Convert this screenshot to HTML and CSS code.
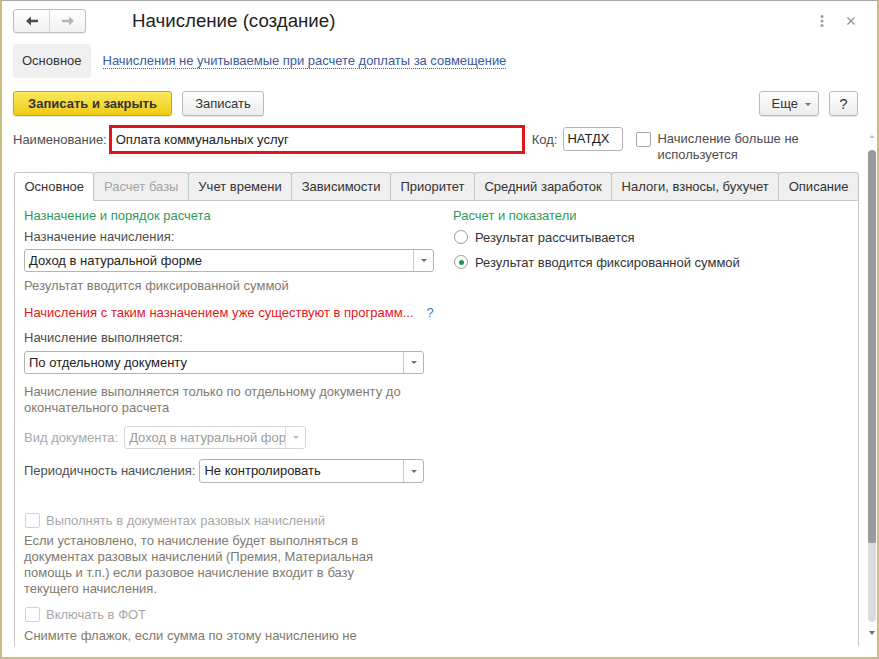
FILE: index.html
```html
<!DOCTYPE html>
<html lang="ru">
<head>
    <meta charset="UTF-8">
    <title>Начисление (создание)</title>
    <link rel="stylesheet" href="styles.css">
</head>
<body>

<div class="window">

    <!-- Заголовок формы -->
    <div class="titlebar">
        <div class="nav">
            <button class="nav-btn nav-back">
                <svg width="12" height="10" viewBox="0 0 12 10"><path d="M0 5 L5 0.5 L5 3.8 L12 3.8 L12 6.2 L5 6.2 L5 9.5 Z" fill="#4a4a4a"/></svg>
            </button>
            <button class="nav-btn">
                <svg width="12" height="10" viewBox="0 0 12 10"><path d="M12 5 L7 0.5 L7 3.8 L0 3.8 L0 6.2 L7 6.2 L7 9.5 Z" fill="#b4b4b4"/></svg>
            </button>
        </div>
        <h1 class="title">Начисление (создание)</h1>
        <div class="title-tools">
            <svg width="4" height="12" viewBox="0 0 4 12"><circle cx="2" cy="1.5" r="1.5" fill="#9a9a9a"/><circle cx="2" cy="6" r="1.5" fill="#9a9a9a"/><circle cx="2" cy="10.5" r="1.5" fill="#9a9a9a"/></svg>
            <svg width="8" height="8" viewBox="0 0 8 8"><path d="M0.5 0.5 L7.5 7.5 M7.5 0.5 L0.5 7.5" stroke="#8a8a8a" stroke-width="1.1"/></svg>
        </div>
    </div>

    <!-- Панель навигации формы -->
    <div class="sections">
        <span class="section-current">Основное</span>
        <a class="section-link" href="#">Начисления не учитываемые при расчете доплаты за совмещение</a>
    </div>

    <!-- Командная панель -->
    <div class="toolbar">
        <button class="btn btn-default">Записать и закрыть</button>
        <button class="btn btn-save">Записать</button>
        <div class="toolbar-right">
            <button class="btn btn-more">Еще <span class="caret"></span></button>
            <button class="btn btn-help">?</button>
        </div>
    </div>

    <div class="scroll-area">
        <div class="form">

            <div class="name-row">
                <span class="name-label">Наименование:</span>
                <div class="field-name">Оплата коммунальных услуг</div>
                <span class="code-label">Код:</span>
                <div class="field-code">НАТДХ</div>
                <span class="check check-top"></span>
                <span class="check-top-label">Начисление больше не<br>используется</span>
            </div>

            <div class="tabs">
                <div class="tab tab-active">Основное</div>
                <div class="tab tab-disabled">Расчет базы</div>
                <div class="tab">Учет времени</div>
                <div class="tab">Зависимости</div>
                <div class="tab">Приоритет</div>
                <div class="tab">Средний заработок</div>
                <div class="tab">Налоги, взносы, бухучет</div>
                <div class="tab">Описание</div>
            </div>

            <div class="tab-panel">
                <div class="col-left">
                    <div class="group-title">Назначение и порядок расчета</div>
                    <div class="field-label mt5">Назначение начисления:</div>
                    <div class="select select-wide mt4">
                        <span class="select-value">Доход в натуральной форме</span>
                        <span class="select-btn"><span class="caret"></span></span>
                    </div>
                    <div class="hint mt6">Результат вводится фиксированной суммой</div>
                    <div class="warn-row mt11">
                        <span class="warn">Начисления с таким назначением уже существуют в программ...</span>
                        <span class="warn-help">?</span>
                    </div>
                    <div class="field-label mt9">Начисление выполняется:</div>
                    <div class="select select-mid mt5">
                        <span class="select-value">По отдельному документу</span>
                        <span class="select-btn"><span class="caret"></span></span>
                    </div>
                    <div class="hint mt10">Начисление выполняется только по отдельному документу до<br>окончательного расчета</div>
                    <div class="inline-row mt10">
                        <span class="field-label disabled">Вид документа:</span>
                        <div class="select select-doc disabled">
                            <span class="select-value">Доход в натуральной фор</span>
                            <span class="select-btn"><span class="caret"></span></span>
                        </div>
                    </div>
                    <div class="inline-row mt10">
                        <span class="field-label">Периодичность начисления:</span>
                        <div class="select select-period">
                            <span class="select-value">Не контролировать</span>
                            <span class="select-btn"><span class="caret"></span></span>
                        </div>
                    </div>
                    <div class="check-row mt29">
                        <span class="check disabled"></span>
                        <span class="disabled">Выполнять в документах разовых начислений</span>
                    </div>
                    <div class="hint mt5">Если установлено, то начисление будет выполняться в<br>документах разовых начислений (Премия, Материальная<br>помощь и т.п.) если разовое начисление входит в базу<br>текущего начисления.</div>
                    <div class="check-row mt9">
                        <span class="check disabled"></span>
                        <span class="disabled">Включать в ФОТ</span>
                    </div>
                    <div class="hint mt6">Снимите флажок, если сумма по этому начислению не</div>
                </div>

                <div class="col-right">
                    <div class="group-title">Расчет и показатели</div>
                    <div class="radio-row mt5">
                        <span class="radio"></span>
                        <span>Результат рассчитывается</span>
                    </div>
                    <div class="radio-row mt9">
                        <span class="radio radio-on"></span>
                        <span>Результат вводится фиксированной суммой</span>
                    </div>
                </div>
            </div>

        </div>

        <!-- Полоса прокрутки -->
        <div class="scrollbar">
            <span class="sb-up"></span>
            <div class="sb-track"><div class="sb-thumb"></div></div>
            <span class="sb-down"></span>
        </div>
    </div>

</div>

</body>
</html>
```

FILE: styles.css
```css
* {
    box-sizing: border-box;
}
html, body {
    margin: 0;
    padding: 0;
}
body {
    font-family: "Liberation Sans", Arial, sans-serif;
    font-size: 13px;
    color: #333;
    background-color: #fff;
    overflow: hidden;
}
button {
    font-family: inherit;
    font-size: 13px;
    color: #333;
    cursor: pointer;
}
.window {
    height: 659px;
    border: 2px solid #cbbd7c;
    border-top: 1px solid #a8a8a8;
    padding-bottom: 11px;
    display: flex;
    flex-direction: column;
}

/* Заголовок */
.titlebar {
    height: 40px;
    flex: none;
    display: flex;
    align-items: center;
    padding: 0 19px 0 11px;
}
.nav {
    display: flex;
    height: 24px;
    border: 1px solid #bdbdbd;
    border-radius: 3px;
    background: linear-gradient(#fff, #f1f1f1);
    box-shadow: 0 1px 1px rgba(0, 0, 0, 0.08);
}
.nav-btn {
    width: 35px;
    border: none;
    background: none;
    padding: 0;
    display: flex;
    align-items: center;
    justify-content: center;
}
.nav-back {
    width: 36px;
    border-right: 1px solid #d4d4d4;
}
.title {
    margin: 0 0 0 46px;
    font-size: 18.7px;
    font-weight: normal;
    color: #1e1e1e;
}
.title-tools {
    margin-left: auto;
    margin-right: 3px;
    display: flex;
    align-items: center;
    gap: 23px;
}

/* Панель разделов */
.sections {
    flex: none;
    margin-top: 3px;
    height: 34px;
    padding-left: 11px;
    display: flex;
    align-items: center;
}
.section-current {
    height: 34px;
    line-height: 34px;
    padding: 0 9px;
    background-color: #f0f0f0;
    border-radius: 3px;
    color: #333;
}
.section-link {
    margin-left: 12px;
    color: #3b5aa0;
    text-decoration: none;
    border-bottom: 1px dotted #3b5aa0;
    line-height: 14px;
    letter-spacing: -0.03px;
}

/* Командная панель */
.toolbar {
    flex: none;
    margin-top: 13px;
    height: 25px;
    padding: 0 19px 0 11px;
    display: flex;
    gap: 10px;
}
.btn {
    height: 25px;
    padding: 0 13px;
    border: 1px solid #b9b9b9;
    border-radius: 3px;
    background: linear-gradient(#fff, #ececec);
    box-shadow: 0 1px 1px rgba(0, 0, 0, 0.1);
}
.btn-default {
    width: 159px;
    padding: 0;
    font-weight: bold;
    background: linear-gradient(#fbe85e, #f1cc14);
    border-color: #c9a90f;
}
.btn-save {
    width: 82px;
    padding: 0;
}
.toolbar-right {
    margin-left: auto;
    display: flex;
    gap: 10px;
}
.btn-more {
    width: 60px;
    padding: 0 0 0 4px;
}
.btn-more .caret {
    margin-left: 3px;
    vertical-align: middle;
}
.btn-help {
    width: 29px;
    padding: 0;
    font-size: 15px;
}
.caret {
    display: inline-block;
    width: 0;
    height: 0;
    border-top: 3px solid #707070;
    border-left: 3px solid transparent;
    border-right: 3px solid transparent;
}

/* Прокручиваемая область */
.scroll-area {
    flex: 1;
    min-height: 0;
    margin-top: 6px;
    display: flex;
    overflow: hidden;
}
.form {
    flex: 1;
    min-width: 0;
    padding: 3px 7px 0 11px;
    display: flex;
    flex-direction: column;
}
.name-row {
    display: flex;
    align-items: flex-start;
    flex: none;
}
.name-label {
    line-height: 29px;
    color: #4e4e4e;
}
.field-name {
    margin-left: 2px;
    width: 416px;
    height: 29px;
    border: 3px solid #e1131b;
    padding-left: 4px;
    line-height: 23px;
    color: #222;
}
.code-label {
    margin-left: 7px;
    line-height: 29px;
    color: #4e4e4e;
}
.field-code {
    margin: 2px 0 0 6px;
    width: 60px;
    height: 24px;
    border: 1px solid #b4b4b4;
    border-radius: 3px;
    padding-left: 3px;
    line-height: 22px;
    color: #222;
}
.check {
    display: inline-block;
    flex: none;
    width: 15px;
    height: 15px;
    border: 1px solid #a8a8a8;
    border-radius: 2px;
    background-color: #fff;
}
.check-top {
    margin: 7px 0 0 13px;
}
.check-top-label {
    margin: 6px 0 0 6px;
    line-height: 16px;
    color: #4e4e4e;
}

/* Вкладки */
.tabs {
    flex: none;
    display: flex;
    height: 28px;
    margin: 9px 0 0 1px;
}
.tab {
    flex: 1 1 auto;
    height: 28px;
    padding: 0 9px;
    margin-left: -1px;
    border: 1px solid #c6c6c6;
    border-bottom: none;
    border-radius: 3px 3px 0 0;
    background-color: #efefef;
    line-height: 27px;
    text-align: center;
    white-space: nowrap;
    color: #333;
}
.tab:first-child {
    margin-left: 0;
}
.tab-active {
    height: 29px;
    background-color: #fff;
    position: relative;
    z-index: 1;
}
.tab-disabled {
    color: #a4a4a4;
}
.tab-panel {
    flex: 1;
    min-height: 0;
    overflow: hidden;
    margin-left: 1px;
    border: 1px solid #c6c6c6;
    border-bottom: none;
    padding: 7px 0 0 9px;
    display: flex;
    gap: 19px;
}
.col-left {
    width: 410px;
    flex: none;
}
.col-right {
    flex: 1;
}
.group-title {
    line-height: 16px;
    color: #2f9a5b;
}
.field-label {
    line-height: 16px;
    color: #4e4e4e;
    white-space: nowrap;
}
.hint {
    line-height: 16px;
    color: #827a6d;
}
.disabled {
    color: #a8a8a8;
}
.warn-row {
    display: flex;
    line-height: 16px;
}
.warn {
    color: #e5161d;
}
.warn-help {
    margin-left: 13px;
    color: #3a78c2;
}

/* Поля выбора */
.select {
    display: flex;
    height: 23px;
    border: 1px solid #b4b4b4;
    border-radius: 3px;
    background-color: #fff;
}
.select-value {
    flex: 1;
    min-width: 0;
    padding-left: 4px;
    line-height: 21px;
    white-space: nowrap;
    overflow: hidden;
    color: #222;
}
.select-btn {
    width: 20px;
    flex: none;
    border-left: 1px solid #cacaca;
    display: flex;
    align-items: center;
    justify-content: center;
}
.select.disabled {
    border-color: #d6d6d6;
}
.select.disabled .select-value {
    color: #9c9c9c;
}
.select.disabled .select-btn {
    border-left-color: #e0e0e0;
}
.select.disabled .caret {
    border-top-color: #bdbdbd;
}
.select-wide {
    width: 410px;
}
.select-mid {
    width: 400px;
}
.inline-row {
    display: flex;
    align-items: center;
}
.select-doc {
    width: 182px;
    margin-left: 6px;
}
.select-period {
    width: 225px;
    height: 24px;
    margin-left: 4px;
}
.check-row {
    display: flex;
    align-items: center;
    gap: 6px;
    height: 16px;
    padding-left: 1px;
}
.check.disabled {
    border-color: #d2d2d2;
}

/* Переключатели */
.radio-row {
    display: flex;
    align-items: center;
    gap: 7px;
    height: 16px;
    padding-left: 1px;
    color: #333;
}
.radio {
    width: 14px;
    height: 14px;
    border: 1px solid #9c9c9c;
    border-radius: 50%;
    background-color: #fff;
    display: flex;
    align-items: center;
    justify-content: center;
}
.radio-on::after {
    content: "";
    width: 5px;
    height: 5px;
    border-radius: 50%;
    background-color: #1f9654;
}

.mt4 { margin-top: 4px; }
.mt5 { margin-top: 5px; }
.mt6 { margin-top: 6px; }
.mt9 { margin-top: 9px; }
.mt10 { margin-top: 10px; }
.mt11 { margin-top: 11px; }
.mt29 { margin-top: 29px; }

/* Полоса прокрутки */
.scrollbar {
    width: 11px;
    flex: none;
    display: flex;
    flex-direction: column;
    align-items: center;
    padding-left: 1px;
}
.sb-up {
    width: 0;
    height: 0;
    margin: 13px 0 12px;
    border-bottom: 3px solid #c4c4c4;
    border-left: 3px solid transparent;
    border-right: 3px solid transparent;
}
.sb-track {
    width: 8px;
    height: 472px;
    border-radius: 4px;
    background-color: #dcdcdc;
}
.sb-thumb {
    height: 393px;
    border-radius: 4px 4px 2px 2px;
    background-color: #9a9a9a;
}
.sb-down {
    width: 0;
    height: 0;
    margin-top: 9px;
    border-top: 4px solid #6e6e6e;
    border-left: 3px solid transparent;
    border-right: 3px solid transparent;
}
```
